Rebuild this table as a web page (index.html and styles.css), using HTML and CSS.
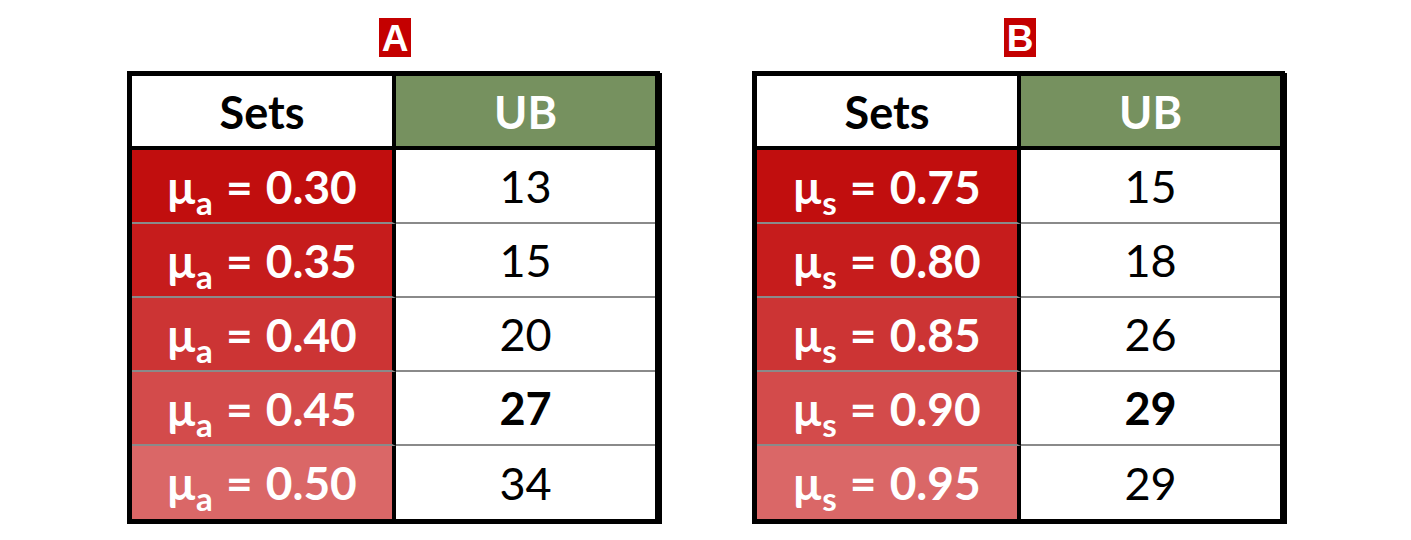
FILE: index.html
```html
<!DOCTYPE html>
<html>
<head>
<meta charset="utf-8">
<link rel="stylesheet" href="styles.css">
</head>
<body>
<div class="panels">
  <section class="panel">
    <div class="label">A</div>
    <div class="tbl">
      <div class="cell head sets">Sets</div>
      <div class="cell head ub">UB</div>
      <div class="cell key r1"><span>μ<sub>a</sub> = 0.30</span></div>
      <div class="cell val">13</div>
      <div class="cell key r2"><span>μ<sub>a</sub> = 0.35</span></div>
      <div class="cell val">15</div>
      <div class="cell key r3"><span>μ<sub>a</sub> = 0.40</span></div>
      <div class="cell val">20</div>
      <div class="cell key r4"><span>μ<sub>a</sub> = 0.45</span></div>
      <div class="cell val best">27</div>
      <div class="cell key r5 last"><span>μ<sub>a</sub> = 0.50</span></div>
      <div class="cell val last">34</div>
    </div>
  </section>
  <section class="panel">
    <div class="label">B</div>
    <div class="tbl">
      <div class="cell head sets">Sets</div>
      <div class="cell head ub">UB</div>
      <div class="cell key r1"><span>μ<sub>s</sub> = 0.75</span></div>
      <div class="cell val">15</div>
      <div class="cell key r2"><span>μ<sub>s</sub> = 0.80</span></div>
      <div class="cell val">18</div>
      <div class="cell key r3"><span>μ<sub>s</sub> = 0.85</span></div>
      <div class="cell val">26</div>
      <div class="cell key r4"><span>μ<sub>s</sub> = 0.90</span></div>
      <div class="cell val best">29</div>
      <div class="cell key r5 last"><span>μ<sub>s</sub> = 0.95</span></div>
      <div class="cell val last">29</div>
    </div>
  </section>
</div>
</body>
</html>
```

FILE: styles.css
```css
html, body {
  margin: 0;
  padding: 0;
  background: #ffffff;
}

body {
  font-family: Lato, "Noto Sans", sans-serif;
}

.panels {
  display: flex;
  gap: 92px;
  padding: 18px 0 0 127px;
}

.panel {
  width: 533px;
  display: flex;
  flex-direction: column;
  align-items: center;
}

.label {
  width: 32px;
  height: 39px;
  margin-left: 3px;
  background: #c40000;
  color: #ffffff;
  font-family: "Liberation Sans", Arial, sans-serif;
  font-weight: bold;
  font-size: 37px;
  line-height: 41px;
  text-align: center;
}

.tbl {
  margin-top: 14px;
  width: 533px;
  box-sizing: border-box;
  border: 5px solid #000000;
  box-shadow: 2px 2px 0 #000000;
  display: grid;
  grid-template-columns: 264px 259px;
  grid-template-rows: 74px repeat(4, 74px) 73px;
}

.cell {
  box-sizing: border-box;
  display: flex;
  align-items: center;
  justify-content: center;
  font-size: 45px;
  line-height: 1;
  color: #000000;
  border-bottom: 2px solid #8a8a8a;
}

.cell.last {
  border-bottom: none;
}

.head {
  font-weight: bold;
  border-bottom: 4px solid #000000;
  padding-top: 2px;
}

.sets {
  background: #ffffff;
  border-right: 4px solid #000000;
}

.ub {
  background: #76915f;
  color: #ffffff;
}

.key {
  color: #ffffff;
  font-weight: bold;
  font-size: 46px;
  border-right: 4px solid #000000;
  padding-top: 1px;
  white-space: nowrap;
}

.key span {
  word-spacing: 2px;
}

.key sub {
  font-size: 33px;
  line-height: 0;
  vertical-align: -11px;
  margin-left: 1px;
}

.r1 { background: #c10e0e; }
.r2 { background: #c61c1c; }
.r3 { background: #cc3434; }
.r4 { background: #d34b4b; }
.r5 { background: #da6767; }

.val {
  background: #ffffff;
  padding-top: 1px;
}

.best {
  font-weight: bold;
}
```
